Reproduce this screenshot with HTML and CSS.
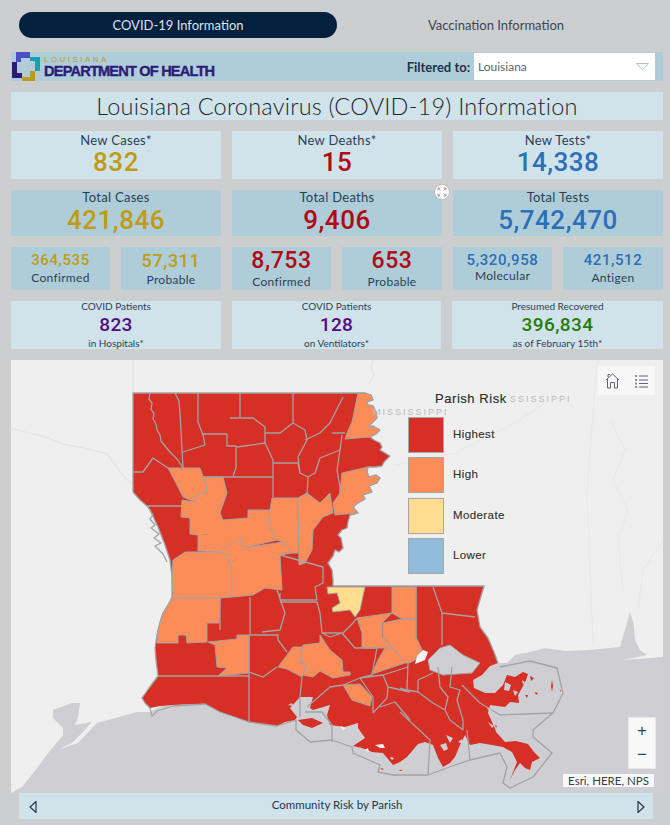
FILE: index.html
```html
<!DOCTYPE html>
<html lang="en">
<head>
<meta charset="utf-8">
<title>Louisiana Coronavirus (COVID-19) Information</title>
<link rel="stylesheet" href="styles.css">
</head>
<body>
<div class="page">
  <nav class="tabs">
    <div class="tab tab-active">COVID-19 Information</div>
    <div class="tab">Vaccination Information</div>
  </nav>

  <header class="brand">
    <div class="logo">
      <svg class="logo-mark" viewBox="0 0 30 30" width="30" height="30" aria-hidden="true">
        <path class="lm-violet" d="M5 0H19V6H10V10H5Z"/>
        <path class="lm-teal" d="M19 5H29V19H24V9H19Z"/>
        <path class="lm-gold" d="M11 25H19V19H24V29H11Z"/>
        <path class="lm-indigo" d="M1 10H6V21H11V26H1Z"/>
      </svg>
      <div class="logo-text">
        <span class="logo-state">LOUISIANA</span>
        <span class="logo-dept">DEPARTMENT OF HEALTH</span>
      </div>
    </div>
    <div class="filter">
      <span class="filter-label">Filtered to:</span>
      <div class="select">
        <span>Louisiana</span>
        <svg class="select-caret" width="13" height="8" viewBox="0 0 13 8" aria-hidden="true"><path d="M.5.5h12L6.5 7z"/></svg>
      </div>
    </div>
  </header>

  <h1 class="title">Louisiana Coronavirus (COVID-19) Information</h1>

  <section class="row row-new">
    <div class="card light"><span class="lbl">New Cases*</span><span class="num gold">832</span></div>
    <div class="card light"><span class="lbl">New Deaths*</span><span class="num red">15</span></div>
    <div class="card light"><span class="lbl">New Tests*</span><span class="num blue">14,338</span></div>
  </section>

  <section class="row row-total">
    <div class="card dark"><span class="lbl lbl-up">Total Cases</span><span class="num gold">421,846</span></div>
    <div class="card dark"><span class="lbl lbl-up">Total Deaths</span><span class="num red">9,406</span></div>
    <div class="card dark"><span class="lbl lbl-up">Total Tests</span><span class="num blue">5,742,470</span></div>
    <button class="expand" aria-label="Expand">
      <svg width="10" height="10" viewBox="0 0 10 10" aria-hidden="true"><path d="M3.5 1H1v2.5M6.5 1H9v2.5M3.5 9H1V6.5M6.5 9H9V6.5M1 1l2.5 2.5M9 1 6.5 3.5M1 9l2.5-2.5M9 9 6.5 6.5"/></svg>
    </button>
  </section>

  <section class="row row-split">
    <div class="pair">
      <div class="card dark sub sub-a"><span class="num-s gold">364,535</span><span class="lbl-s">Confirmed</span></div>
      <div class="card dark sub sub-b"><span class="num-m gold">57,311</span><span class="lbl-s">Probable</span></div>
    </div>
    <div class="pair">
      <div class="card dark sub sub-c"><span class="num-l red">8,753</span><span class="lbl-s">Confirmed</span></div>
      <div class="card dark sub sub-c"><span class="num-l red">653</span><span class="lbl-s">Probable</span></div>
    </div>
    <div class="pair">
      <div class="card dark sub sub-d"><span class="num-s blue">5,320,958</span><span class="lbl-s">Molecular</span></div>
      <div class="card dark sub sub-a"><span class="num-s blue">421,512</span><span class="lbl-s">Antigen</span></div>
    </div>
  </section>

  <section class="row row-patients">
    <div class="card light pt"><span class="lbl-xs">COVID Patients</span><span class="num-p purple">823</span><span class="lbl-xs">in Hospitals*</span></div>
    <div class="card light pt"><span class="lbl-xs">COVID Patients</span><span class="num-p purple">128</span><span class="lbl-xs">on Ventilators*</span></div>
    <div class="card light pt"><span class="lbl-xs">Presumed Recovered</span><span class="num-p green">396,834</span><span class="lbl-xs">as of February 15th*</span></div>
  </section>

  <section class="map">
    <svg class="map-svg" viewBox="11 360 652 433" width="652" height="433" aria-hidden="true">
      <!-- gulf -->
      <path class="gulf" d="M11 793 22 787 38 767 63 748 78 743 97 723 137 712 150 712 173 700 300 690 400 680 498 663 507 663 515 655 530 652 545 648 565 651 590 650 610 648 620 647 625 630 630 612 634 625 635 640 640 650 647 655 623 660 663 657V793Z"/>
      <path class="gulf" d="M53 710 72 703 80 703 78 717 75 725 92 722 80 735 72 743 63 747 45 767 38 767 45 757 63 735 63 728 53 718Z"/>
      <!-- faint base-map lines -->
      <path class="faint" d="M133 360V393M373 360l-2 8 3 7-5 9M11 428l14 4 18 4 20 8 20 4 24 6 12 16 6 8 10 8"/>
      <path class="faint2" d="M597 360 587 493 593 643M395 465l60-12 60-30 30-20M610 420l15 30-12 30 15 30-10 30 5 50M663 540l-20 30-5 40"/>
      <text class="map-label" x="510" y="402">SSISSIPPI</text>

      <!-- state fill -->
      <path class="state" d="M133 393H365L371 395 373 400 367 402 368 405 373 406 376 412 377 418 372 423 368 427 373 426 380 430 376 434 370 437 374 440 380 443 382 447 380 450 390 456 384 462 382 466 376 467 368 467 367 472 369 477 376 475 380 478 377 483 369 486 372 492 363 495 365 499 358 503 353 507 358 513 350 515 348 522 347 528 342 530 338 535 341 538 343 548 339 552 335 550 333 556 328 563 332 570 333 580 333 586H484L477 610 480 627 488 638 494 652 498 663 490 666 482 675 473 680 474 688 485 693 495 693 503 685 507 675 515 677 523 672 528 674 526 680 522 688 518 695 519 703 510 702 505 707 490 705 488 713 492 722 497 733 505 742 516 741 528 744 534 752 540 758 532 762 530 770 525 768 520 763 515 770 510 780 517 762 512 752 503 747 492 745 480 743 470 745 465 735 460 745 455 757 450 763 443 767 438 758 433 745 425 742 418 744 407 757 400 762 393 765 383 753 372 752 362 748 353 746 365 738 358 728 358 723 345 727 330 725 327 715 330 705 313 710 310 708 313 697 300 697 290 708 297 717 295 720 285 722 277 726 262 724 249 722 235 717 220 712 205 704 190 704 173 705 160 706 150 708 145 703 142 698 149 688 155 680 158 676 156 660 155 648 157 635 160 622 163 613 168 605 172 597 172 577 170 560 165 545 158 527 150 510 148 507 140 500 133 492Z"/>

      <!-- orange parishes -->
      <path class="parish-orange" d="M168 468H200L207 487 206 493 198 494 195 502 183 497 177 485Z"/>
      <path class="parish-orange" d="M203 477H223L227 493 220 513 223 520 248 518V510H270L268 523 277 540 243 548 240 538 220 552 198 551V535L190 534V518L181 517 182 500 195 502 198 494 206 493 207 487Z"/>
      <path class="parish-orange" d="M272 498H298V553L292 553 283 542 277 540 268 523 270 510Z"/>
      <path class="parish-orange" d="M298 498 307 493 320 503 330 493 333 513 323 517 313 530 312 550 305 563 299 565Z"/>
      <path class="parish-orange" d="M185 552H218L228 555 232 570V597L220 598H173L172 577 173 560Z"/>
      <path class="parish-orange" d="M240 538 243 548 283 542 292 553 280 555 282 590 265 588 253 595 232 597V570L228 555 218 552Z"/>
      <path class="parish-orange" d="M342 473 368 467 367 472 369 477 376 475 380 478 377 483 369 486 372 492 363 495 365 499 358 503 353 507 358 513 335 515 333 503 340 493Z"/>
      <path class="parish-orange" d="M358 393H365L371 395 373 400 367 402 368 405 373 406 376 412 377 418 372 423 368 427 373 426 380 430 376 434 370 437 345 439 347 433 352 422Z"/>
      <path class="parish-orange" d="M172 598H220L219 623H207V642L187 643 186 635H178V643H157L158 630 163 613 168 605Z"/>
      <path class="parish-orange" d="M208 642 237 639V635H249V673L218 676 227 668 217 667 215 645Z"/>
      <path class="parish-orange" d="M278 667 293 647H303L300 663 307 665 302 677 287 669Z"/>
      <path class="parish-orange" d="M303 645 320 643V635L330 650 342 660 343 672H350V675L333 678 320 671 313 677 303 675 307 665 300 662Z"/>
      <path class="parish-orange" d="M343 685 360 684 372 697 370 706 352 700Z"/>
      <path class="parish-orange" d="M357 618 392 613 382 623V637L393 648H362V633Z"/>
      <path class="parish-orange" d="M392 587H416V619H402L392 613Z"/>
      <path class="parish-orange" d="M383 623 402 619H416V637L422 650 415 660 409 663 405 663 393 648 383 637Z"/>
      <path class="parish-orange" d="M385 648H393L405 663 372 674 378 660Z"/>
      <path class="parish-yellow" d="M327 587H365L360 610 355 617 350 610 333 612 332 608 340 603 337 593 328 594Z"/>
      <path class="white-spot" d="M423 650 428 652 425 660 415 664 417 656Z"/>

      <!-- water inside the state -->
      <path class="lake" d="M428 660 440 648 450 645 463 655 480 663 472 673 443 675 430 670Z"/>
      <path class="island" d="M298 720 312 718 323 723 312 728 303 725Z"/>

      <!-- state outline on the rivers and the west -->
      <path class="lines" d="M133 492V393H365L371 395 373 400 367 402 368 405 373 406 376 412 377 418 372 423 368 427 373 426 380 430 376 434 370 437 374 440 380 443 382 447 380 450 390 456 384 462 382 466 376 467 368 467 367 472 369 477 376 475 380 478 377 483 369 486 372 492 363 495 365 499 358 503 353 507 358 513 350 515 348 522 347 528 342 530 338 535 341 538 343 548 339 552 335 550 333 556 328 563 332 570 333 580 333 586H484L477 610 480 627 488 638 494 652 498 663M150 708 145 703 142 698 149 688 155 680 158 676 156 660 155 648 157 635 160 622 163 613 168 605 172 597 172 577 170 560 165 545 158 527 150 510 148 507 140 500 133 492"/>
      <path class="lines" d="M148 507l5 8-3 4 5 6-4 3 8 6-5 4 7 5-6 3 8 8 4 8M150 393l-1 6 3 4-1 6 3 5-1 5 3 5 1 6 3 5 1 6 4 5 5 6 8 8 5 8"/>

      <!-- parish lines -->
      <path class="lines" d="M175 393l4 8 1 12 1 18 1 19 1 18M198 393V422L203 435 205 445 183 452M240 393V417M293 393V423M343 397 330 423 320 433 305 440M203 434H227V446H236V468L233 476M230 418H253L265 427V443L237 447M265 433H280L293 423 305 430 307 440M265 443 273 460V497M203 477H273M273 463H298L300 473 308 477 307 497M307 440 298 457 300 473M342 435 340 450 320 458 315 473 308 477M340 450 337 470 340 487V493M332 433H345M133 472H143L153 458 168 468M147 506H182M280 555 323 567V583L315 587 317 600M280 593V600H317M220 598V630M250 597V635M250 635H278V640L287 652M262 632 280 630 285 613 277 590M280 602H317L320 613 322 633H343L353 623 357 618M322 633 330 637 342 633 355 648H362M355 648H377L372 675 360 678M249 635V723M249 672 263 677 277 667M158 676H249M302 677 300 697V717M307 707 330 687 343 685 360 678M360 678 373 697V713M360 678 383 675 388 687 387 698 373 713M383 675 408 667M388 687 410 692M380 707 395 702 410 720M433 587 442 613V645M442 613 475 617M416 587V640M400 688 407 690 408 663M407 690 418 692 433 703 445 710 450 720 463 730M418 680 433 673M418 680V692M438 667 440 687 448 697 445 710M452 667 450 687 460 690 457 700 463 720V730M462 685 480 703 500 715M400 712 430 740 428 775"/>

      <!-- offshore outlines -->
      <path class="lines" d="M150 708 152 716 157 711 173 706 205 704 220 712 249 722 262 724 277 726 296 720V730L310 742 332 740 352 747 353 753 380 765 378 772 393 775 428 775 455 765 470 760 500 753 507 767 503 783 510 788 533 777 552 753 533 737V730L553 713 563 693 557 668 530 661 500 667"/>
      <path class="lines" d="M305 712H322L332 725V742M467 730 470 760M500 715 553 713"/>
      <!-- marsh specks -->
      <path class="speck" d="M505 682l6 3-2 6-5-1zM513 690l5 2-3 4zM522 680l3 2-2 3zM530 676l2 1-1 3zM492 715l5 2-3 3zM488 722l6 4-2 2zM495 730l4 1-1 3zM487 708l4 1-1 3zM440 745l6-2 2 6-4 2zM446 735l7 3-3 5zM458 742l4-3 1 5zM382 764l5 1-2 2zM403 766l6 1-3 2zM300 707l4 1-1 3zM288 705l4-2 1 3zM415 748l6-1-1 4zM408 755l5 0-2 3z"/>
      <path class="speck-red" d="M552 680l1 6-1 6-1-6zM530 676l4 2-3 3zM535 692l3 1-2 2zM525 695l3 0-1 3zM380 768l4 1-2 1zM398 770l5 0-2 1zM495 725l2 1-1 2zM560 690h1v2z"/>
      <path class="speck-w" d="M340 726l6 2-3 2zM375 745l8-1 2 4-5 0zM365 750l3-2 1 4zM390 757l4 1-2 2z"/>
      <text class="map-label" x="373" y="415">MISSISSIPPI</text>
    </svg>

    <div class="legend">
      <div class="legend-title">Parish Risk</div>
      <div class="legend-row"><span class="swatch sw-red"></span><span class="legend-lbl">Highest</span></div>
      <div class="legend-row"><span class="swatch sw-orange"></span><span class="legend-lbl">High</span></div>
      <div class="legend-row"><span class="swatch sw-yellow"></span><span class="legend-lbl">Moderate</span></div>
      <div class="legend-row"><span class="swatch sw-blue"></span><span class="legend-lbl">Lower</span></div>
    </div>

    <div class="tools">
      <svg width="15" height="16" viewBox="0 0 15 16" aria-hidden="true"><path d="M1 7 7.5 1 14 7M2.5 5.500V15H5.500V9.500h4V15h3V5.500M3 4V1.500h2"/></svg>
      <svg width="14" height="14" viewBox="0 0 14 14" aria-hidden="true"><path d="M5 2h9M5 6h9M5 9.500h9M5 13h9"/><path class="dots" d="M1 1h2v2H1zM1 5h2v2H1zM1 8.500h2v2H1zM1 12h2v2H1z"/></svg>
    </div>
    <div class="zoomer"><span>+</span><span>−</span></div>
    <div class="attr">Esri, HERE, NPS</div>
  </section>

  <footer class="pager">
    <svg width="8" height="12" viewBox="0 0 8 12" aria-hidden="true"><path d="M7 .5V11.500L1 6z"/></svg>
    <span>Community Risk by Parish</span>
    <svg width="8" height="12" viewBox="0 0 8 12" aria-hidden="true"><path d="M1 .5V11.500L7 6z"/></svg>
  </footer>
</div>
</body>
</html>
```
FILE: styles.css
```css
* { box-sizing: border-box; }
html, body { margin: 0; height: 100%; }
body {
  background: #cdced0;
  color: #24364d;
  font-family: Lato, "Open Sans", sans-serif;
  overflow: hidden;
}
.page { width: 670px; height: 825px; padding: 12px 7px 0 11px; display: flex; flex-direction: column; }

.tabs { display: grid; grid-template-columns: 318px 318px; margin-left: 8px; height: 26px; }
.tab { display: flex; align-items: center; justify-content: center; font-size: 13px; color: #3b4656; border-radius: 13px; }
.tab-active { background: #04203f; color: #d9e4ec; }

.brand { margin-top: 14px; height: 29px; background: #aecdd9; display: flex; justify-content: space-between; }
.logo { display: flex; align-items: flex-start; }
.logo-mark { flex: none; }
.lm-violet { fill: #4d4fc4; }
.lm-teal { fill: #14a3b0; }
.lm-gold { fill: #bd9c1a; }
.lm-indigo { fill: #2e1a78; }
.logo-text { display: flex; flex-direction: column; margin: 4px 0 0 3px; font-family: "Liberation Sans", sans-serif; line-height: 1; }
.logo-state { color: #bd9c1a; font-size: 8px; letter-spacing: 2.45px; height: 8px; line-height: 8px; }
.logo-dept { color: #2e1a78; font-size: 14.6px; font-weight: 700; height: 15px; line-height: 15px; letter-spacing: -.82px; -webkit-text-stroke: .35px #2e1a78; }
.filter { display: flex; align-items: center; padding-right: 8px; }
.filter-label { font-size: 13px; font-weight: 700; color: #1f3148; margin-right: 4px; }
.select { width: 181px; height: 27px; background: #fff; display: flex; align-items: center; justify-content: space-between; padding: 0 6px 0 4px; font-size: 12px; color: #5a6470; }
.select-caret { fill: #fff; stroke: #b5bcc4; }

.title { margin: 11px 0 0; height: 28px; background: #d0e3ea; color: #1f252c; font-size: 23.5px; font-weight: 300; line-height: 28px; text-align: center; letter-spacing: .22px; }

.row { display: grid; grid-template-columns: repeat(3, 210px); column-gap: 11px; position: relative; margin-top: 11px; }
.row-new { height: 48px; }
.row-total { height: 46px; }
.row-split { height: 43px; }
.row-patients { height: 48px; }

.card { display: flex; flex-direction: column; align-items: center; min-width: 0; }
.light { background: #d0e3ea; }
.dark { background: #aecdd9; }

.lbl { font-size: 13px; line-height: 16px; color: #2c3e55; margin-top: 1px; letter-spacing: .3px; }
.lbl-up { margin-top: -1px; }
.num { font-family: Roboto, "Liberation Sans", sans-serif; font-weight: 500; font-size: 26px; line-height: 29px; letter-spacing: .5px; }
.lbl-up + .num { margin-top: 1px; }
.gold { color: #c09b14; }
.red { color: #b00a12; }
.blue { color: #2b70b8; }
.purple { color: #510a80; }
.green { color: #2a7a06; }

.expand { position: absolute; left: 423px; top: -6px; width: 16px; height: 16px; padding: 0; border-radius: 50%; border: 1px solid #bbb; background: #fff; display: flex; align-items: center; justify-content: center; }
.expand svg { fill: none; stroke: #888; stroke-width: .8; }

.pair { display: grid; grid-template-columns: 99px 100px; column-gap: 11px; }
.sub { justify-content: flex-start; }
.num-s, .num-m, .num-l { font-family: Roboto, "Liberation Sans", sans-serif; font-weight: 500; letter-spacing: .6px; }
.num-s { font-size: 15px; line-height: 18px; margin-top: 4px; }
.num-m { font-size: 18px; line-height: 20px; margin-top: 4px; }
.num-l { font-size: 23px; line-height: 26px; margin-top: 1px; }
.lbl-s { font-size: 12px; line-height: 15px; color: #2c3f55; letter-spacing: .3px; }
.sub-a .lbl-s { margin-top: 1px; }
.sub-b .lbl-s { margin-top: 1px; }
.sub-d .lbl-s { margin-top: -1px; }
.sub-c .lbl-s { margin-top: 0; }

.row-patients { grid-template-columns: 210px 209px 211px; column-gap: 11px; }
.pt { justify-content: flex-start; }
.lbl-xs { font-size: 10px; line-height: 12px; color: #2c3f55; }
.pt .lbl-xs:first-child { margin-top: -1px; }
.num-p { font-family: Roboto, "Liberation Sans", sans-serif; font-weight: 500; font-size: 19px; line-height: 25px; letter-spacing: .4px; }

.map { position: relative; margin-top: 11px; height: 433px; width: 652px; background: #efefef; flex: none; }
.map-svg { display: block; }
.gulf { fill: #cfcfd3; }
.faint { fill: none; stroke: #e3e3e3; stroke-width: 1.2; }
.faint2 { fill: none; stroke: #e8e8e8; stroke-width: 1; }
.map-label { font-family: "Liberation Sans", sans-serif; font-size: 9px; letter-spacing: 2px; fill: #b9b9bc; }
.state { fill: #d62f25; }
.island { fill: #d62f25; }
.parish-orange { fill: #fd8d58; stroke: #a3a3a3; stroke-width: 1; stroke-linejoin: round; }
.parish-yellow { fill: #ffdc8f; stroke: #a3a3a3; stroke-width: 1; stroke-linejoin: round; }
.white-spot { fill: #f4f4f4; }
.lake { fill: #cfcfd3; stroke: #a3a3a3; stroke-width: 1; }
.lines { fill: none; stroke: #a3a3a3; stroke-width: 1.3; stroke-linejoin: round; }
.speck { fill: #cfcfd3; }
.speck-red { fill: #d62f25; }
.speck-w { fill: #f3f3f3; }

.legend { position: absolute; left: 397px; top: 31px; font-family: "Liberation Sans", sans-serif; color: #2e2e2e; text-shadow: 0 0 2px #fff; }
.legend-title { font-size: 13px; font-weight: 400; letter-spacing: .55px; line-height: 16px; margin-left: 27px; margin-bottom: 8px; -webkit-text-stroke: .2px #2e2e2e; }
.legend-row { display: flex; align-items: center; height: 40.300px; }
.swatch { width: 36px; height: 36px; border: 1px solid #a6a6a6; flex: none; }
.sw-red { background: #d62f25; }
.sw-orange { background: #fd8d58; }
.sw-yellow { background: #ffdc8f; }
.sw-blue { background: #92bcdb; }
.legend-lbl { font-size: 11.500px; margin: -2px 0 0 9px; letter-spacing: .4px; -webkit-text-stroke: .15px #2e2e2e; }

.tools { position: absolute; left: 587px; top: 6px; width: 57px; height: 29px; background: #f7f7f7; display: flex; align-items: center; justify-content: space-between; padding: 0 7px; }
.tools svg { fill: none; stroke: #5f6670; stroke-width: 1; }
.tools .dots { fill: #8a9099; stroke: none; }
.zoomer { position: absolute; left: 617px; top: 357px; width: 28px; height: 52px; background: #f8f8f8; border: 1px solid #e7e7e7; display: flex; flex-direction: column; align-items: center; justify-content: center; font-family: "Liberation Sans", sans-serif; font-size: 17px; line-height: 24px; color: #36475c; }
.attr { position: absolute; left: 552px; top: 414px; width: 91px; height: 13px; background: rgba(255, 255, 255, .85); font-size: 11.500px; line-height: 13px; color: #3a3f47; text-align: center; white-space: nowrap; }

.pager { margin: -1px 0 0 8px; width: 634px; height: 27px; background: #d0e3ea; display: flex; align-items: center; justify-content: space-between; padding: 0 8px 0 10px; font-size: 11.500px; color: #24364d; }
.pager svg { fill: none; stroke: #24364d; stroke-width: 1.2; margin-top: 3px; }
.pager span { margin-top: -3px; }
```
